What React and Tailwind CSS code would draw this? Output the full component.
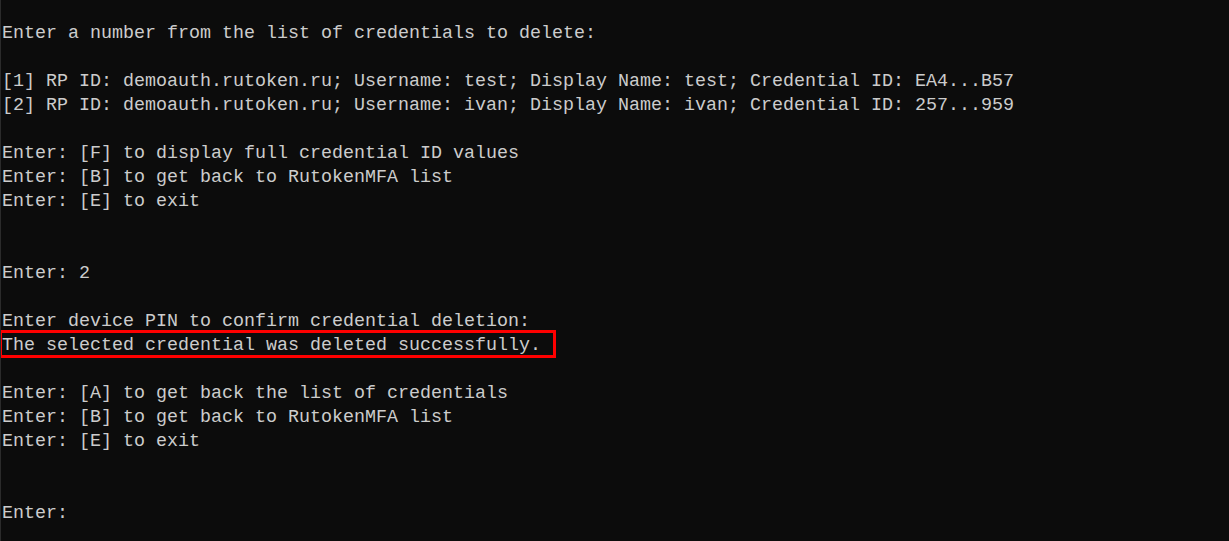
const lines = [
  'Enter a number from the list of credentials to delete:',
  '',
  '[1] RP ID: demoauth.rutoken.ru; Username: test; Display Name: test; Credential ID: EA4...B57',
  '[2] RP ID: demoauth.rutoken.ru; Username: ivan; Display Name: ivan; Credential ID: 257...959',
  '',
  'Enter: [F] to display full credential ID values',
  'Enter: [B] to get back to RutokenMFA list',
  'Enter: [E] to exit',
  '',
  '',
  'Enter: 2',
  '',
  'Enter device PIN to confirm credential deletion:',
  { text: 'The selected credential was deleted successfully.', mark: true },
  '',
  'Enter: [A] to get back the list of credentials',
  'Enter: [B] to get back to RutokenMFA list',
  'Enter: [E] to exit',
  '',
  '',
  'Enter:',
]

export default function App() {
  return (
    <div className="w-[1229px] h-[541px] overflow-hidden bg-[#0c0c0c] border-l border-[#2b2b2b] pt-[22px] text-[#cccccc] font-['Liberation_Mono',monospace] text-[18.33px] leading-[24px]">
      {lines.map((l, i) => {
        if (typeof l === 'object') {
          return (
            <div key={i} className="relative h-[24px] pl-[1px] whitespace-pre">
              {l.text}
              <div className="absolute left-[-1px] top-[-4px] w-[556px] h-[28px] border-[3px] border-l-2 border-[#ff0000]" />
            </div>
          )
        }
        return <div key={i} className="h-[24px] pl-[1px] whitespace-pre">{l}</div>
      })}
    </div>
  )
}
